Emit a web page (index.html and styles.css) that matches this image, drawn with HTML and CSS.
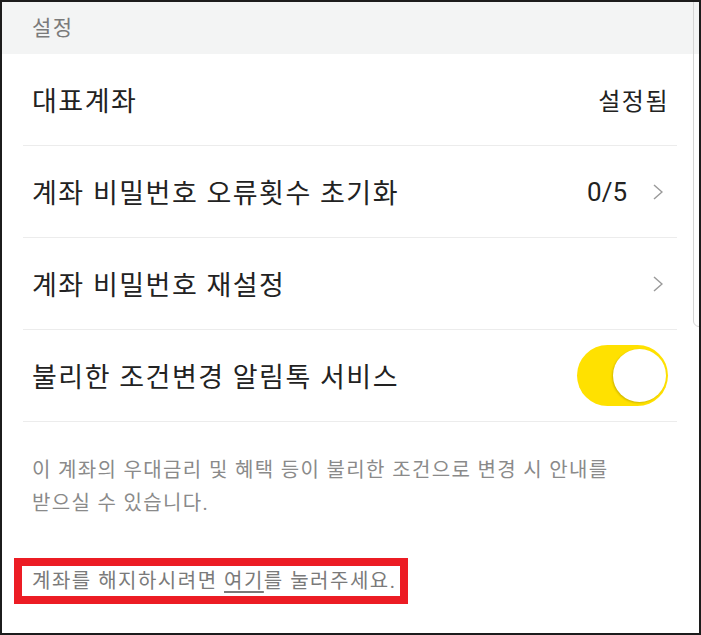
FILE: index.html
```html
<!DOCTYPE html>
<html lang="ko">
<head>
  <meta charset="UTF-8" />
  <meta name="viewport" content="width=device-width, initial-scale=1" />
  <title>설정</title>
  <link rel="stylesheet" href="styles.css">
</head>
<body>
  <div class="screen">
    <div class="section-title">설정</div>

    <ul class="settings">
      <li class="setting-row">
        <span class="label">대표계좌</span>
        <span class="value text">설정됨</span>
      </li>
      <li class="setting-row">
        <span class="label">계좌 비밀번호 오류횟수 초기화</span>
        <span class="value">
          0/5
          <svg class="chevron" width="10" height="16" viewBox="0 0 10 16"><polyline points="1,1 9,8 1,15" /></svg>
        </span>
      </li>
      <li class="setting-row">
        <span class="label">계좌 비밀번호 재설정</span>
        <span class="value">
          <svg class="chevron" width="10" height="16" viewBox="0 0 10 16"><polyline points="1,1 9,8 1,15" /></svg>
        </span>
      </li>
      <li class="setting-row">
        <span class="label">불리한 조건변경 알림톡 서비스</span>
        <span class="toggle on"><span class="knob"></span></span>
      </li>
    </ul>

    <p class="notice">이 계좌의 우대금리 및 혜택 등이 불리한 조건으로 변경 시 안내를<br>받으실 수 있습니다.</p>

    <div class="close-account">
      <span class="highlight">계좌를 해지하시려면 <a href="#">여기</a>를 눌러주세요.</span>
    </div>

    <!-- scroll indicator -->
    <div class="scroll-thumb"></div>
  </div>
</body>
</html>
```

FILE: styles.css
```css
/* Page frame */
body {
  margin: 0;
  padding: 0;
  font-family: Roboto, "Noto Sans CJK KR", sans-serif;
  background: #fff;
}

.screen {
  position: relative;
  width: 701px;
  height: 635px;
  box-sizing: border-box;
  border: 2px solid #1c1c1c;
  background: #fff;
  overflow: hidden;
}

/* Section header */
.section-title {
  height: 52px;
  padding-left: 30px;
  background: #f3f4f4;
  color: #7a7a7a;
  font-size: 21px;
  letter-spacing: 1.5px;
  line-height: 52px;
}

/* Settings list */
.settings {
  list-style: none;
  margin: 0 22px 0 21px;
  padding: 0;
}

.setting-row {
  display: flex;
  align-items: center;
  justify-content: space-between;
  height: 91px;
  padding: 0 9px;
  border-bottom: 1px solid #ececec;
  color: #222;
  font-size: 26px;
}

.label {
  font-size: 27px;
  letter-spacing: 1.5px;
}

.value {
  display: flex;
  align-items: center;
  gap: 26px;
  color: #222;
}

.value.text {
  font-size: 24px;
  letter-spacing: 1.5px;
  margin-right: -1px;
}

.chevron {
  margin-right: 5px;
}

.chevron polyline {
  fill: none;
  stroke: #9a9a9a;
  stroke-width: 1.5;
}

/* Toggle switch */
.toggle {
  display: flex;
  align-items: center;
  justify-content: flex-end;
  width: 91px;
  height: 61px;
  box-sizing: border-box;
  padding: 0 2px;
  border-radius: 31px;
  background: #ffe100;
}

.knob {
  width: 53px;
  height: 53px;
  border-radius: 50%;
  background: #fff;
  box-shadow: -1px 1px 2px rgba(0, 0, 0, 0.18);
}

/* Notice text */
.notice {
  margin: 0;
  padding: 32px 0 0 30px;
  color: #8a8a8a;
  font-size: 20px;
  letter-spacing: 1.35px;
  line-height: 33px;
}

/* Close account link */
.close-account {
  padding: 38px 0 0 12px;
}

.highlight {
  display: inline-block;
  padding: 0 4px 0 10px;
  border: 8px solid #ec1c24;
  color: #7a7a7a;
  font-size: 20px;
  letter-spacing: 1.5px;
  line-height: 30px;
}

.highlight a {
  color: #7a7a7a;
  text-decoration: underline;
  text-underline-offset: 3px;
}

/* Scroll indicator over right edge */
.scroll-thumb {
  position: absolute;
  top: -10px;
  left: 691px;
  width: 12px;
  height: 333px;
  border: 1px solid #d4d4d4;
  border-radius: 6px;
}
```
